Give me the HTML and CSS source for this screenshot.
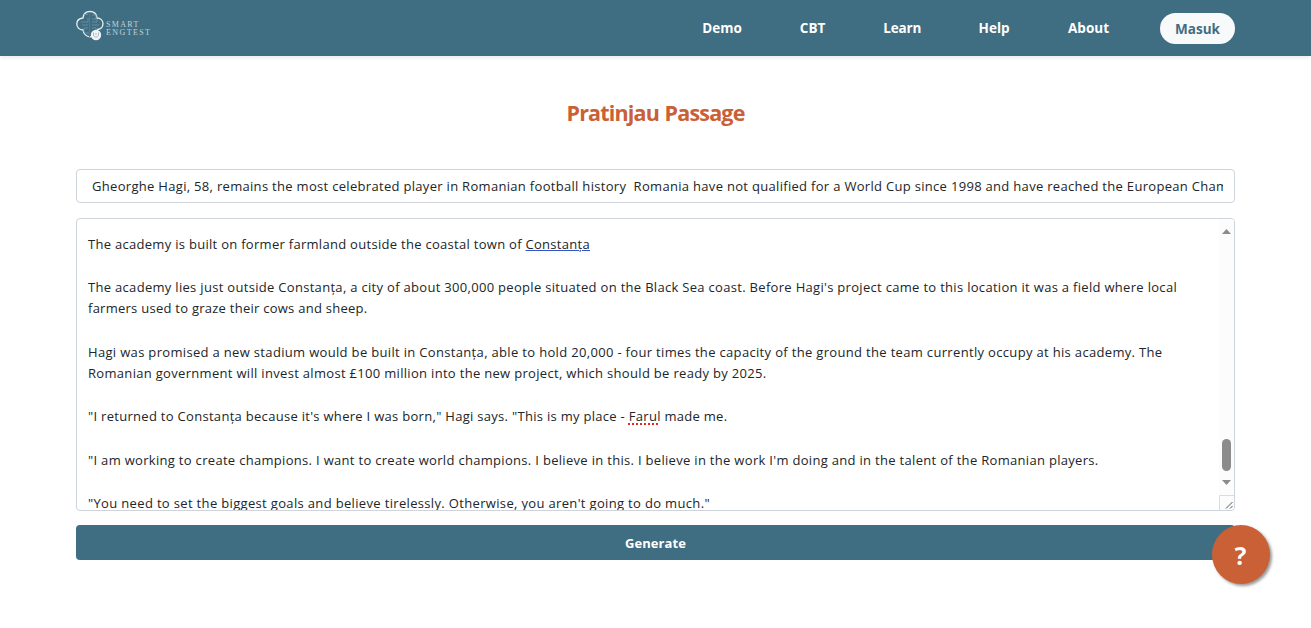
FILE: index.html
```html
<!DOCTYPE html>
<html lang="id">
<head>
<meta charset="utf-8">
<title>Smart Engtest</title>
<link rel="stylesheet" href="styles.css">
</head>
<body>
<header class="navbar">
  <a class="brand">
    <svg class="brand-mark" width="30" height="32" viewBox="0 0 30 32" fill="none">
      <path d="M7 8C7.500 4 10 1.500 14 1.500S20.500 4 21 8C24.500 8 27 10.500 27 13.500S25 19 21.500 19.500C20.500 24 17.500 26.800 14 26.800S7.500 24 7 20C3 20 .8 17 .8 14S3 8.500 7 8Z" stroke="#e8eff2" stroke-width="1.300"/>
      <path d="M12 4.500H8M12 8v4H5M6 15h6M12 18H8v4M16 5h4v4h-4M16 12h5V9M16 15h7M16 18h4v3M9 23h4" stroke="#7396a4" stroke-width=".8"/>
      <path d="M13.500 2v25" stroke="#ad5c3c" stroke-width="1"/>
      <circle cx="20" cy="25" r="5.200" fill="#f0f4f6"/>
      <path d="M17.500 22.500v3c1 2 4 2 5 0v-3M19 24h2" stroke="#a7b9c2"/>
    </svg>
    <span class="brand-name"><span class="brand-top">SMART</span><span class="brand-bottom">ENGTEST</span></span>
  </a>
  <nav class="menu">
    <a class="link demo">Demo</a>
    <a class="link cbt">CBT</a>
    <a class="link learn">Learn</a>
    <a class="link guide">Help</a>
    <a class="link about">About</a>
    <a class="login">Masuk</a>
  </nav>
</header>
<main class="content">
  <h1 class="title">Pratinjau Passage</h1>
  <div class="field"><div class="field-text">Gheorghe Hagi, 58, remains the most celebrated player in Romanian football history&nbsp; Romania have not qualified for a World Cup since 1998 and have reached the European Cham</div></div>
  <div class="passage">
    <div class="passage-text">
      <p><span class="l1">The academy is built on former farmland outside the coastal town of <u class="grammar">Constanța</u></span></p>
      <p><span class="l2">The academy lies just outside Constanța, a city of about 300,000 people situated on the Black Sea coast. Before Hagi's project came to this location it was a field where local</span><br><span class="l3">farmers used to graze their cows and sheep.</span></p>
      <p><span class="l4">Hagi was promised a new stadium would be built in Constanța, able to hold 20,000 - four times the capacity of the ground the team currently occupy at his academy. The</span><br><span class="l5">Romanian government will invest almost £100 million into the new project, which should be ready by 2025.</span></p>
      <p><span class="l6">"I returned to Constanța because it's where I was born," Hagi says. "This is my place - <u class="spelling">Farul</u> made me.</span></p>
      <p><span class="l7">"I am working to create champions. I want to create world champions. I believe in this. I believe in the work I'm doing and in the talent of the Romanian players.</span></p>
      <p><span class="l8">"You need to set the biggest goals and believe tirelessly. Otherwise, you aren't going to do much."</span></p>
    </div>
    <div class="scrollbar">
      <svg class="arrow" width="9" height="5" viewBox="0 0 9 5"><path d="M0 5L4.500 0L9 5Z" fill="#8b8b8b"/></svg>
      <div class="thumb"></div>
      <svg class="arrow" width="9" height="5" viewBox="0 0 9 5"><path d="M0 0L4.500 5L9 0Z" fill="#8b8b8b"/></svg>
      <svg class="grip" width="15" height="15" viewBox="0 0 15 15"><path d="M.5 15V.5H15" fill="none" stroke="#dcdcdc"/><path d="M7 13.500L13.500 7M11 13.500L13.500 11" stroke="#555" stroke-width="1"/></svg>
    </div>
  </div>
  <button class="generate">Generate</button>
</main>
<a class="help">?</a>
</body>
</html>
```
FILE: styles.css
```css
* { box-sizing: border-box; }
body { margin: 0; height: 628px; overflow: hidden; background: #fff; color: #212529; font-family: "Open Sans", "Noto Sans", sans-serif; }
.navbar { display: flex; justify-content: space-between; align-items: flex-start; height: 56px; padding: 0 76px; background: #3f6d81; box-shadow: 0 2px 4px rgba(0,0,0,.075); }
.brand { display: flex; margin-top: 10px; }
.brand-name { display: flex; flex-direction: column; padding-top: 11px; color: #c3d2d9; font: 8px/8px "Liberation Serif", serif; letter-spacing: 1.4px; }
.brand-top { letter-spacing: 1.3px; }
.menu { display: flex; align-items: center; height: 56px; color: #fff; font-size: 13.5px; font-weight: 700; }
.link { margin-right: 58px; }
.learn { margin-right: 57.5px; letter-spacing: -.2px; }
.guide { margin-right: 58.5px; }
.about { margin-right: 51px; }
.login { display: flex; align-items: center; justify-content: center; width: 75px; height: 31px; padding-top: 1px; border-radius: 16px; background: #f8f9fa; color: #3f6d81; }
.content { width: 1159px; margin: 0 auto; }
.title { margin: 40px 0; text-align: center; color: #c96036; font-size: 21.5px; line-height: 33px; letter-spacing: -.82px; word-spacing: .8px; }
.field { height: 34px; padding: 0 11px; border: 1px solid #ced4da; border-radius: 4px; font-size: 13px; line-height: 32px; letter-spacing: .308px; }
.field-text { overflow: hidden; white-space: nowrap; padding-left: 4px; }
.passage { display: flex; height: 293px; margin-top: 15px; border: 1px solid #ced4da; border-radius: 4px; overflow: hidden; font-size: 13px; line-height: 21.6px; }
.passage-text { flex: 1; padding: 14.6px 0 0 11px; white-space: nowrap; }
.passage-text p { margin: 0 0 21.6px; }
.l1 { letter-spacing: .291px; }
.l2 { letter-spacing: .306px; }
.l3 { letter-spacing: .258px; }
.l4 { letter-spacing: .329px; }
.l5 { letter-spacing: .313px; }
.l6 { letter-spacing: .295px; }
.l7 { letter-spacing: .308px; }
.l8 { letter-spacing: .338px; }
.grammar { text-decoration: underline #3355cc; }
.spelling { text-decoration: underline dotted #e22 1.5px; text-underline-offset: 2px; text-decoration-skip-ink: none; }
.scrollbar { display: flex; flex-direction: column; align-items: center; width: 15px; background: #fcfcfc; padding-top: 10px; }
.thumb { flex: none; width: 9px; height: 32px; margin: 205px 0 9px; border-radius: 5px; background: #8b8b8b; }
.arrow { flex: none; }
.grip { margin-top: auto; flex: none; }
.generate { display: block; width: 100%; height: 35px; margin-top: 14px; padding: 0; border: 0; border-radius: 4px; background: #3f6d81; color: #fff; font: 700 13px "Open Sans", sans-serif; letter-spacing: .1px; }
.help { position: fixed; left: 1212px; top: 525px; display: flex; align-items: center; justify-content: center; width: 58px; height: 59px; padding-right: 1px; border-radius: 50%; background: #c96036; color: #fff; font-size: 25px; font-weight: 700; box-shadow: 2px 2px 3px #999; }
```
